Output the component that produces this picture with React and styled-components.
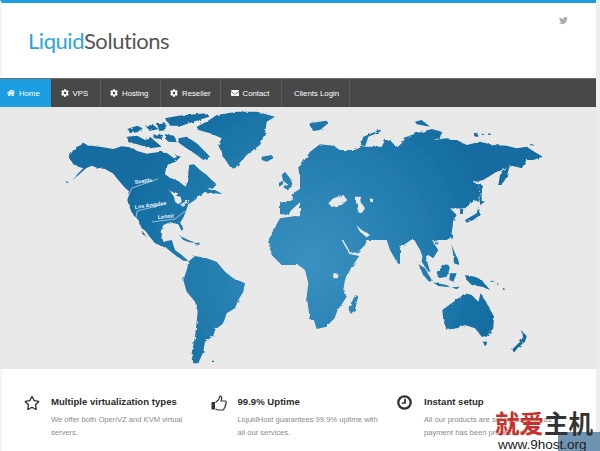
import React from "react";
import styled, { createGlobalStyle } from "styled-components";
import { FaHome, FaCog, FaEnvelope, FaRegStar, FaTwitter } from "react-icons/fa";

// map outlines, traced per crop: [originX, originY, points at 3x]
const LAND = [
  [50, 105, "60,150 75,128 100,116 125,122 150,125 190,132 215,124 240,127 262,138 290,146 320,142 345,140 362,152 372,160 388,155 378,170 355,178 348,190 345,208 360,218 385,228 400,240 407,245 415,225 415,200 418,180 432,178 450,195 470,210 485,225 500,238 490,250 475,255 495,255 518,267 490,265 465,262 450,270 435,285 415,298 408,318 400,338 392,350 400,372 395,378 385,358 360,352 340,360 330,385 330,405 320,405 296,385 275,370 265,345 250,330 238,305 232,285 240,262 222,245 205,225 188,205 165,192 140,188 125,182 108,190 88,208 68,225 85,205 100,190 85,185 70,178 62,165 55,155"],
  [50, 105, "232,72 262,62 278,70 262,82 240,84"],
  [50, 105, "285,62 310,60 325,72 300,78"],
  [50, 105, "320,55 345,52 350,75 328,78"],
  [50, 105, "345,88 372,92 380,112 355,110 345,100"],
  [50, 105, "232,95 262,92 285,105 305,100 335,125 300,130 262,118 235,112"],
  [50, 105, "310,88 340,90 335,102 312,100"],
  [50, 105, "345,40 385,32 470,25 478,35 430,50 395,62 360,62"],
  [50, 105, "385,100 410,95 440,115 470,145 480,155 460,165 440,150 410,130 388,115"],
  [50, 105, "378,150 392,155 382,165"],
  [50, 105, "440,65 470,50 500,30 560,20 620,20 675,35 650,50 645,85 630,120 590,150 555,190 540,185 520,155 505,120 515,100 480,85 445,75"],
  [50, 105, "635,155 665,150 670,160 650,170 635,165"],
  [50, 105, "48,232 56,230 54,235"],
  // Eurasia
  [300, 105, "0,185 30,140 60,118 100,122 135,145 120,150 108,148 120,168 150,150 165,135 185,125 245,125 255,105 270,105 290,128 305,115 320,95 350,85 395,72 425,80 420,98 400,105 440,100 470,105 500,120 540,110 580,120 620,122 650,130 680,125 710,145 728,155 700,165 680,165 665,190 635,182 610,195 590,200 550,225 520,232 540,240 535,285 520,290 495,310 470,310 450,310 470,330 460,345 450,370 455,395 440,405 0,405"],
  [230, 150, "150,155 185,152 185,132 205,120 225,105 250,105 262,95 280,75 300,62 270,60 282,25 300,10 330,0 510,0 510,340 500,332 490,300 470,265 455,255 430,250 420,250 415,262 405,285 385,305 362,310 340,270 322,235 335,232 340,190 305,195 290,200 278,172 255,172 270,190 250,172 232,148 215,152 190,175 170,195 150,192"],
  [230, 150, "205,50 250,25 285,15 265,45 255,75 235,95 218,88 207,70"],
  [230, 150, "160,95 155,75 165,65 180,85 190,108 170,118 158,112 172,100"],
  [230, 150, "145,100 158,92 160,102 148,110"],
  [370, 190, "0,0 325,0 325,25 300,40 270,55 240,55 235,62 250,90 245,130 205,150 188,155 205,180 190,205 175,195 160,205 150,180 130,145 88,175 78,212 60,180 50,150 30,130 0,125"],
  [350, 230, "218,75 228,80 240,125 235,125 215,95"],
  [370, 190, "270,55 280,58 278,72 270,78"],
  [370, 190, "285,90 320,70 325,50 330,75 310,90 290,98"],
  [370, 190, "325,30 345,35 330,45"],
  [370, 190, "245,130 250,130 248,147 243,145"],
  [370, 190, "195,155 205,155 205,163 196,163"],
  [300, 105, "595,240 600,210 630,180 620,215 605,240"],
  [300, 105, "540,235 546,240 545,290 538,285"],
  [300, 105, "182,120 190,95 245,72 240,80 205,95 195,125"],
  [300, 105, "25,55 80,47 85,55 60,75 40,78"],
  [300, 105, "345,50 365,45 390,65 350,58"],
  [300, 105, "525,85 535,85 535,95 525,95"],
  [300, 105, "545,85 552,86 552,90 545,90"],
  [300, 105, "565,85 572,86 572,90 565,90"],
  [300, 105, "690,118 700,118 700,121 690,121"],
  // Africa
  [230, 150, "150,205 195,198 225,200 250,218 290,213 320,220 335,270 358,312 388,318 365,350 345,390 340,420 350,440 330,470 315,490 310,510 240,510 230,440 235,400 225,360 205,345 155,345 125,315 115,275 130,240"],
  [100, 230, "620,200 735,180 718,225 705,262 680,290 650,297 640,265 625,215"],
  [230, 150, "378,432 384,440 375,480 362,492 355,475 365,455"],
  // Americas south of the US
  [100, 230, "265,95 285,78 320,85 350,95 375,125 400,145 435,160 430,185 415,210 405,235 380,250 370,280 345,300 340,318 315,335 310,365 295,400 280,400 275,370 285,320 293,245 285,215 260,185 250,150 262,115"],
  [100, 230, "135,0 180,0 190,35 215,30 225,60 245,75 265,92 250,92 225,75 200,55 165,40 145,15"],
  [100, 230, "125,0 138,18 130,15"],
  [100, 230, "240,18 270,32 285,40 265,36 250,30"],
  [100, 230, "285,38 300,40 298,44 285,43"],
  [100, 230, "332,392 342,392 342,396 332,396"],
  // Australia and islands
  [350, 230, "277,240 318,210 345,190 365,195 385,215 392,190 410,220 432,260 430,295 410,320 395,320 375,295 345,285 320,295 290,300 280,270"],
  [350, 230, "398,335 412,335 408,347 400,345"],
  [350, 230, "512,300 530,318 525,335 505,352 492,368 487,358 510,335 520,320"],
  [350, 230, "345,135 375,140 395,150 420,180 395,170 365,165 350,150"],
  [350, 230, "260,125 290,100 300,115 290,140 265,145"],
  [350, 230, "205,102 225,115 245,150 240,158 220,135"],
  [350, 230, "248,157 290,165 300,172 265,168"],
  [350, 230, "300,130 320,130 310,155 298,150"],
  [350, 230, "305,45 315,70 325,90 328,105 312,100 310,75"],
  [350, 230, "305,172 330,170 320,178"],
  [350, 230, "140,88 150,90 150,102 142,100"],
  [350, 230, "420,155 433,148 430,156"],
  [350, 230, "440,160 446,160 444,165"],
  [350, 230, "458,173 466,178 460,180"],
];

const SEAS = [
  [230, 150, "295,160 310,145 340,135 352,150 335,165 305,170"],
  [230, 150, "375,140 392,140 395,160 405,175 395,190 380,185 385,165 375,155"],
  [230, 150, "420,145 430,148 428,157 420,155"],
  [230, 150, "378,225 395,240 420,255 410,262 390,245"],
  [230, 150, "310,370 322,370 322,385 310,385"],
  [50, 105, "360,258 385,265 378,272 392,275 395,290 385,298 375,290 372,275"],
  [50, 105, "390,298 418,284 415,292 395,302"],
];

const toPoints = (ox, oy, pts) =>
  pts.split(" ").map((p) => {
    const [x, y] = p.split(",").map(Number);
    return `${(ox + x / 3).toFixed(1)},${(oy + y / 3).toFixed(1)}`;
  }).join(" ");

const NAV = [
  { label: "Home", Icon: FaHome, width: 51, active: true },
  { label: "VPS", Icon: FaCog, width: 49.5 },
  { label: "Hosting", Icon: FaCog, width: 60 },
  { label: "Reseller", Icon: FaCog, width: 60.5 },
  { label: "Contact", Icon: FaEnvelope, width: 61 },
  { label: "Clients Login", width: 68 },
];

const Thumb = () => (
  <svg width="16" height="16" viewBox="0 0 16 16">
    <rect x="0.5" y="7" width="3.5" height="7.5" fill="#333" />
    <path d="M4.5 7.5 L7.5 5 L9 1 C11 0.8 11.3 3 10 6 L14.5 6 C15.6 6.4 15.4 8 14.6 8.6 C15.2 9.6 14.7 10.6 14 11 C14.4 12 13.8 13 13 13.3 C13.2 14.3 12.6 15 11.5 15 L7 15 L4.5 14" fill="none" stroke="#333" strokeWidth="1.2" />
  </svg>
);

const Clock = () => (
  <svg width="15" height="15" viewBox="0 0 15 15">
    <circle cx="7.5" cy="7.5" r="6.2" fill="none" stroke="#333" strokeWidth="2.3" />
    <path d="M8 3.8 V8 H4.8" fill="none" stroke="#333" strokeWidth="1.7" />
  </svg>
);

const FEATURES = [
  { icon: <FaRegStar size={16} color="#333" />, title: "Multiple virtualization types", text: "We offer both OpenVZ and KVM virtual servers." },
  { icon: <Thumb />, title: "99.9% Uptime", text: "LiquidHost guarantees 99.9% uptime with all our services." },
  { icon: <Clock />, title: "Instant setup", text: "All our products are set up as soon as payment has been processed." },
];

const GlobalStyle = createGlobalStyle`
  html, body {
    margin: 0;
    height: 451px;
    overflow: hidden;
    background: #ededed;
    font-family: "Liberation Sans", Arial, sans-serif;
  }
`;

const Page = styled.div`
  position: relative;
  width: 596px;
  height: 451px;
`;

const Header = styled.header`
  display: flex;
  justify-content: space-between;
  align-items: flex-start;
  height: 75px;
  border-top: 3px solid #1b9ddf;
  border-left: 2px solid #f5f5f5;
  background: #fff;
  padding: 0 28px 0 26px;
  width: 540px;
`;

const Logo = styled.div`
  margin-top: 24px;
  font-family: Lato, sans-serif;
  font-size: 22px;
  line-height: 28px;
  letter-spacing: -0.45px;
  color: #555;
`;

const LogoAccent = styled.span`
  color: #2aa6da;
`;

const Social = styled.a`
  display: block;
  margin-top: 13px;
  color: #adadad;
  font-size: 9px;
`;

const Nav = styled.nav`
  display: flex;
  height: 29px;
  box-sizing: border-box;
  background: #484848;
  border-top: 1px solid #6e6e6e;
`;

const NavItem = styled.a`
  display: flex;
  align-items: center;
  gap: 4px;
  box-sizing: border-box;
  width: ${(p) => p.$w}px;
  padding-left: ${(p) => (p.$active ? 7 : p.$plain ? 12 : 9.5)}px;
  font-size: 7.8px;
  color: #fff;
  background: ${(p) => (p.$active ? "#1b9ddf" : "transparent")};
  border-right: ${(p) => (p.$active ? "none" : "1px solid #5c5c5c")};
  svg {
    font-size: 8px;
  }
`;

const Hero = styled.section`
  height: 262px;
  background-color: #e9e9e9;
  background-image: radial-gradient(#e7e7e7 1px, transparent 1px);
  background-size: 4px 4px;
`;

const MapSvg = styled.svg`
  display: block;
`;

const Land = styled.polygon`
  fill: url(#landFill);
`;

const Sea = styled.polygon`
  fill: #e9e9e9;
`;

const CityLine = styled.polyline`
  fill: none;
  stroke: #e8f2f8;
  stroke-width: 0.6;
`;

const CityName = styled.text`
  fill: #f2f7fa;
  font-size: 5.4px;
  font-weight: bold;
  font-family: "Liberation Sans", sans-serif;
`;

const Features = styled.section`
  display: grid;
  grid-template-columns: repeat(3, 186.5px);
  height: 82px;
  box-sizing: border-box;
  padding: 25px 0 0 22px;
  background: #fff;
  border-left: 2px solid #f5f5f5;
`;

const Feature = styled.div`
  display: flex;
  gap: 11px;
`;

const FeatureIcon = styled.div`
  flex: none;
  width: 16px;
  height: 16px;
  margin-top: 1px;
`;

const FeatureBody = styled.div`
  width: 142px;
`;

const FeatureTitle = styled.h3`
  margin: 0 0 3px;
  font-size: 9.6px;
  line-height: 16px;
  font-weight: bold;
  color: #2c2c2c;
`;

const FeatureText = styled.p`
  margin: 0;
  font-size: 7.6px;
  line-height: 13px;
  color: #8a8a8a;
`;

const Stamp = styled.div`
  position: absolute;
  right: -4px;
  bottom: 0;
  width: 42px;
  height: 19px;
  background: #6f94b2;
`;

const Watermark = styled.div`
  position: absolute;
  left: 495px;
  top: 408px;
  width: 105px;
`;

const MarkTitle = styled.div`
  font-family: "Noto Sans CJK SC", sans-serif;
  font-size: 24.5px;
  line-height: 30px;
  font-weight: 700;
  color: #333;
  white-space: nowrap;
`;

const MarkRed = styled.span`
  color: #c9302c;
`;

const MarkUrl = styled.div`
  margin: 0 0 0 3px;
  font-size: 13.5px;
  line-height: 14px;
  color: #222;
  white-space: nowrap;
`;

export default function App() {
  return (
    <Page>
      <GlobalStyle />
      <Header>
        <Logo>
          <LogoAccent>Liquid</LogoAccent>Solutions
        </Logo>
        <Social>
          <FaTwitter />
        </Social>
      </Header>
      <Nav>
        {NAV.map(({ label, Icon, width, active }) => (
          <NavItem key={label} $w={width} $active={active} $plain={!Icon}>
            {Icon && <Icon />}
            {label}
          </NavItem>
        ))}
      </Nav>
      <Hero>
        <MapSvg width="596" height="262" viewBox="0 107 596 262">
          <defs>
            <radialGradient id="landFill" gradientUnits="userSpaceOnUse" cx="310" cy="262" r="190">
              <stop offset="0" stopColor="#3a92c1" />
              <stop offset="1" stopColor="#136ca1" />
            </radialGradient>
            <filter id="rough" x="0" y="0" width="100%" height="100%">
              <feTurbulence type="fractalNoise" baseFrequency="0.22" numOctaves="2" seed="4" result="n" />
              <feDisplacementMap in="SourceGraphic" in2="n" scale="3" />
              <feGaussianBlur stdDeviation="0.3" />
            </filter>
          </defs>
          <g filter="url(#rough)">
            {LAND.map(([ox, oy, pts], i) => (
              <Land key={i} points={toPoints(ox, oy, pts)} />
            ))}
            {SEAS.map(([ox, oy, pts], i) => (
              <Sea key={i} points={toPoints(ox, oy, pts)} />
            ))}
          </g>
          <CityLine points="129,194 132,188 158,179" />
          <CityName x="135" y="184" transform="rotate(-8 135 184)">Seattle</CityName>
          <CityLine points="136,218 137,211 165,204" />
          <CityName x="135" y="209" transform="rotate(-8 135 209)">Los Angeles</CityName>
          <CityLine points="152,222 175,219 185,211" />
          <CityName x="158" y="219" transform="rotate(-6 158 219)">Lenoir</CityName>
        </MapSvg>
      </Hero>
      <Features>
        {FEATURES.map((f) => (
          <Feature key={f.title}>
            <FeatureIcon>{f.icon}</FeatureIcon>
            <FeatureBody>
              <FeatureTitle>{f.title}</FeatureTitle>
              <FeatureText>{f.text}</FeatureText>
            </FeatureBody>
          </Feature>
        ))}
      </Features>
      <Stamp />
      <Watermark>
        <MarkTitle>
          <MarkRed>就爱</MarkRed>主机
        </MarkTitle>
        <MarkUrl>www.9host.org</MarkUrl>
      </Watermark>
    </Page>
  );
}
